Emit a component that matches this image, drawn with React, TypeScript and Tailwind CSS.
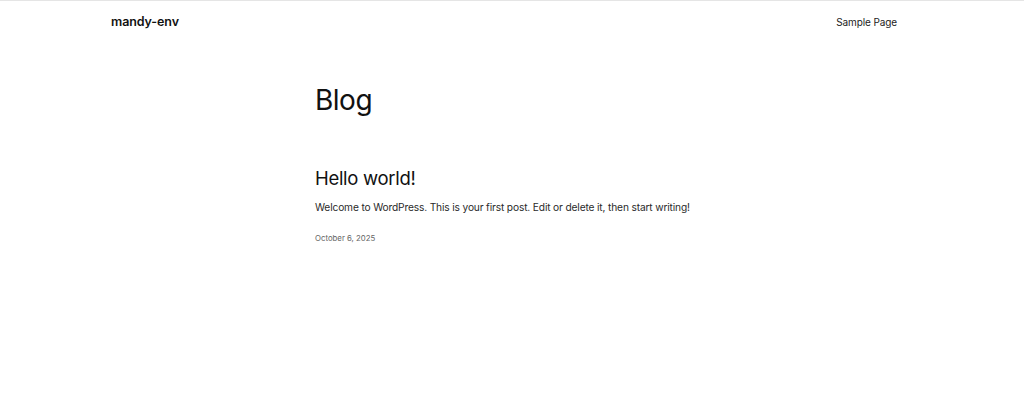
export default function App() {
  return (
    <div className="min-h-[412px] w-full bg-white text-[#111111]" style={{ fontFamily: 'Inter, "Noto Sans", sans-serif' }}>
      <div className="h-px bg-[#e5e5e5]" />
      <header className="flex items-center justify-between pl-[111px] pr-[127px] pt-[12px] pb-[13px]">
        <div className="text-[12.5px] font-semibold tracking-[-0.1px]">mandy-env</div>
        <nav className="text-[10px] text-[#222] tracking-[-0.1px]">Sample Page</nav>
      </header>
      <main className="pl-[315px] pt-[41px]">
        <h1 className="text-[28px] leading-none font-normal tracking-[-0.5px]">Blog</h1>
        <h2 className="mt-[55px] text-[18.5px] leading-none font-normal tracking-[-0.3px]">Hello world!</h2>
        <p className="mt-[15px] text-[10.2px] leading-none text-[#2a2a2a] tracking-[-0.15px]">Welcome to WordPress. This is your first post. Edit or delete it, then start writing!</p>
        <p className="mt-[23px] text-[7.8px] leading-none text-[#666]">October 6, 2025</p>
      </main>
    </div>
  );
}
